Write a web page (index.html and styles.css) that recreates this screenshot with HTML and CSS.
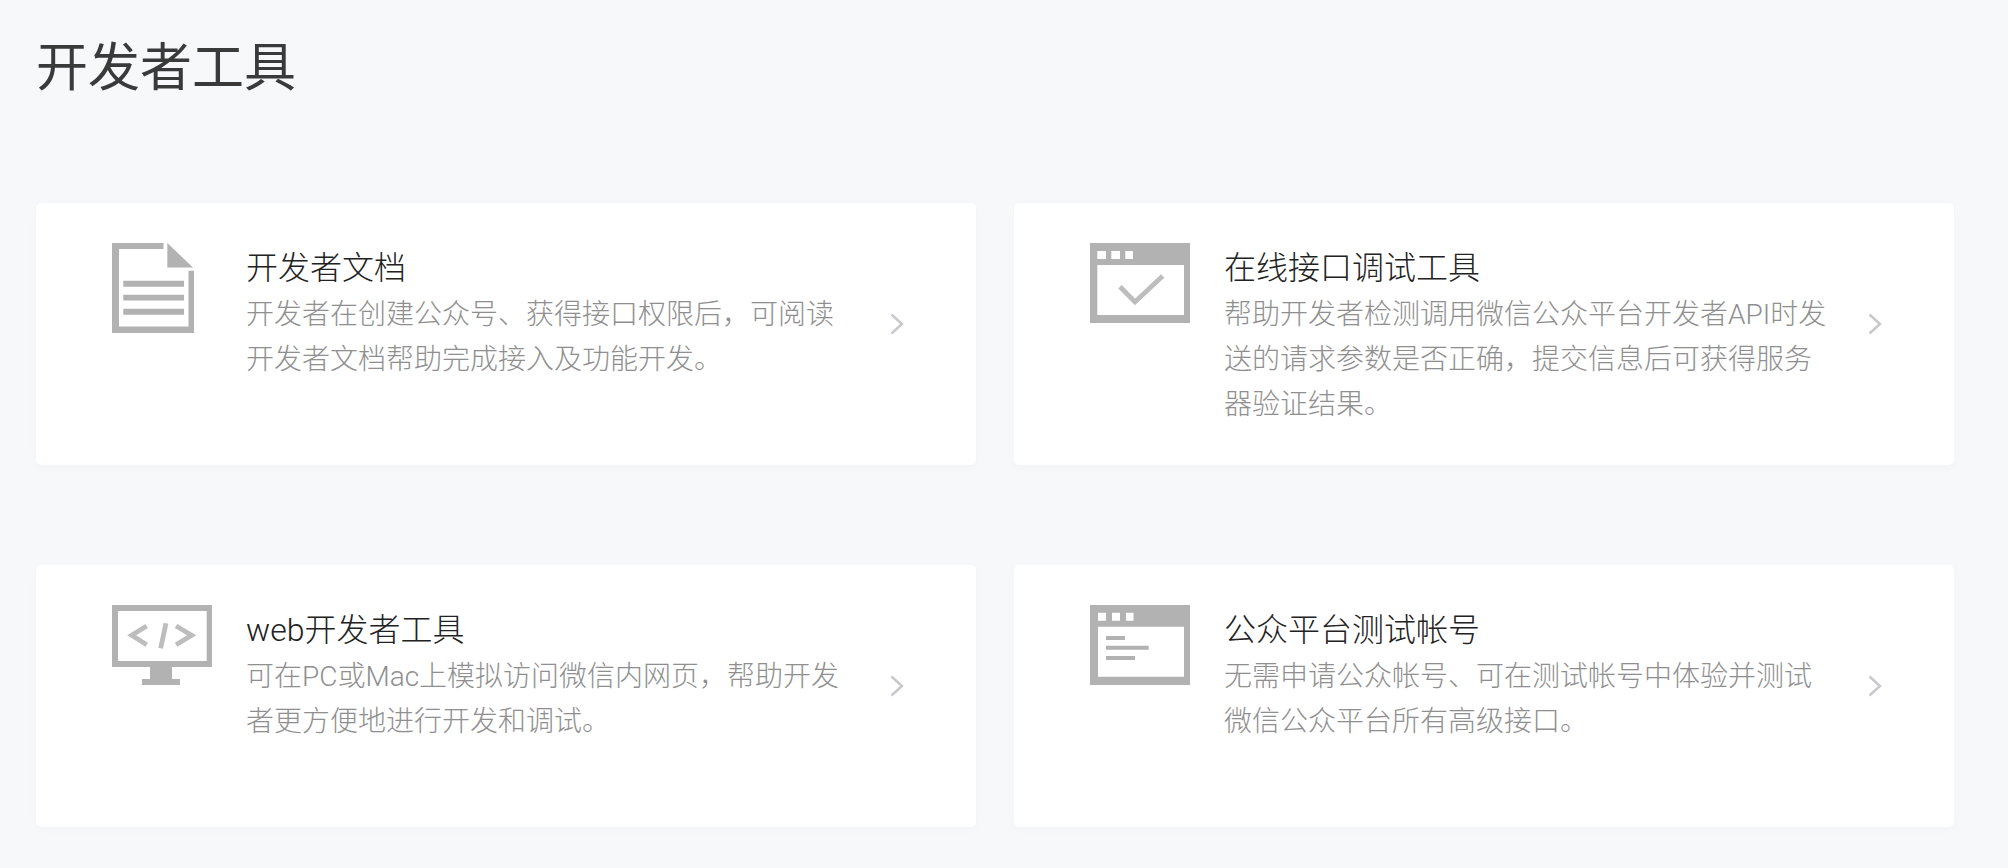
FILE: index.html
```html
<!DOCTYPE html>
<html lang="zh-CN">
<head>
<meta charset="utf-8">
<title>开发者工具</title>
<link rel="stylesheet" href="styles.css">
</head>
<body>
<h1 class="page-title">开发者工具</h1>
<div class="card-grid">
  <a class="card">
    <div class="card-icon">
      <svg width="82" height="90" viewBox="0 0 82 90"><path class="ico" fill-rule="evenodd" d="M0 0H51.500V6H7V83.500H76.500V27.700H82V90H0Z"/><path class="ico" d="M55.300 0L81 24.500H55.300Z"/><path class="ico" d="M11.300 37.700H72V43.700H11.300ZM11.300 51.700H72V57.500H11.300ZM11.300 65.700H72V71.700H11.300Z"/></svg>
    </div>
    <div class="card-body">
      <h2 class="card-title">开发者文档</h2>
      <p class="card-desc">开发者在创建公众号、获得接口权限后，可阅读开发者文档帮助完成接入及功能开发。</p>
    </div>
    <svg class="card-arrow" width="14" height="22" viewBox="0 0 14 22"><path d="M1.500 1.500L12 11L1.500 20.500"/></svg>
  </a>
  <a class="card">
    <div class="card-icon">
      <svg width="100" height="80" viewBox="0 0 100 80"><path class="ico" fill-rule="evenodd" d="M0 0H100V80H0ZM7.300 22V72H94V22ZM7.300 8V16H16V8ZM21.300 8V16H30V8ZM35.300 8V16H43V8Z"/><path class="ico-line" d="M30 43.700L45 59L72.700 33"/></svg>
    </div>
    <div class="card-body">
      <h2 class="card-title">在线接口调试工具</h2>
      <p class="card-desc">帮助开发者检测调用微信公众平台开发者API时发送的请求参数是否正确，提交信息后可获得服务器验证结果。</p>
    </div>
    <svg class="card-arrow" width="14" height="22" viewBox="0 0 14 22"><path d="M1.500 1.500L12 11L1.500 20.500"/></svg>
  </a>
  <a class="card">
    <div class="card-icon">
      <svg width="100" height="80" viewBox="0 0 100 80"><path class="ico" fill-rule="evenodd" d="M0 0H100V62H60V74H68V80H30V74H38V62H0ZM6 6V56H94.700V6Z"/><path class="ico-line" d="M34.700 21L19.700 30.300L34.700 39.700M54 18.300L48.700 43.300M64 21L79.700 30.300L64 39.700"/></svg>
    </div>
    <div class="card-body">
      <h2 class="card-title">web开发者工具</h2>
      <p class="card-desc">可在PC或Mac上模拟访问微信内网页，帮助开发者更方便地进行开发和调试。</p>
    </div>
    <svg class="card-arrow" width="14" height="22" viewBox="0 0 14 22"><path d="M1.500 1.500L12 11L1.500 20.500"/></svg>
  </a>
  <a class="card">
    <div class="card-icon">
      <svg width="100" height="80" viewBox="0 0 100 80"><path class="ico" fill-rule="evenodd" d="M0 0H100V80H0ZM8 21.700V71.700H94V21.700ZM8 7.700V15.700H16V7.700ZM22 7.700V15.700H30V7.700ZM36 7.700V15.700H43.500V7.700Z"/><path class="ico" d="M16 31H35V35H16ZM16 40.700H58.700V44.700H16ZM16 51H45V55H16Z"/></svg>
    </div>
    <div class="card-body">
      <h2 class="card-title">公众平台测试帐号</h2>
      <p class="card-desc">无需申请公众帐号、可在测试帐号中体验并测试微信公众平台所有高级接口。</p>
    </div>
    <svg class="card-arrow" width="14" height="22" viewBox="0 0 14 22"><path d="M1.500 1.500L12 11L1.500 20.500"/></svg>
  </a>
</div>
</body>
</html>
```
FILE: styles.css
```css
* {
  box-sizing: border-box;
}

html, body {
  margin: 0;
  height: 100%;
}

body {
  background: #f7f8fa;
  color: #3a3a3a;
  font-family: Roboto, "Noto Sans CJK SC", sans-serif;
  padding: 33px 54px 0 36px;
  overflow: hidden;
}

.page-title {
  margin: 0 0 98px;
  font-size: 52px;
  line-height: 72px;
  font-weight: 400;
}

.card-grid {
  display: grid;
  grid-template-columns: 940px 940px;
  grid-auto-rows: 262px;
  column-gap: 38px;
  row-gap: 100px;
}

.card {
  display: flex;
  align-items: flex-start;
  padding: 40px 0 0 76px;
  background: #fff;
  border-radius: 5px;
  box-shadow: 0 2px 10px rgba(0, 0, 0, 0.025);
}

.card-icon {
  flex: 0 0 134px;
  display: flex;
}

.card-icon svg {
  display: block;
  filter: blur(0.5px);
}

.ico {
  fill: #b2b2b2;
}

.ico-line {
  fill: none;
  stroke: #bdbdbd;
  stroke-width: 4.8;
}

.card-body {
  flex: 0 0 610px;
}

.card-title {
  margin: 0;
  font-size: 32px;
  line-height: 50px;
  font-weight: 300;
  color: #222;
}

.card-desc {
  margin: 0;
  font-size: 28px;
  line-height: 44.8px;
  font-weight: 300;
  color: #8f8f8f;
}

.card-arrow {
  margin: 70px 0 0 34px;
  fill: none;
  stroke: #c8c8cc;
  stroke-width: 2.4;
}
```
